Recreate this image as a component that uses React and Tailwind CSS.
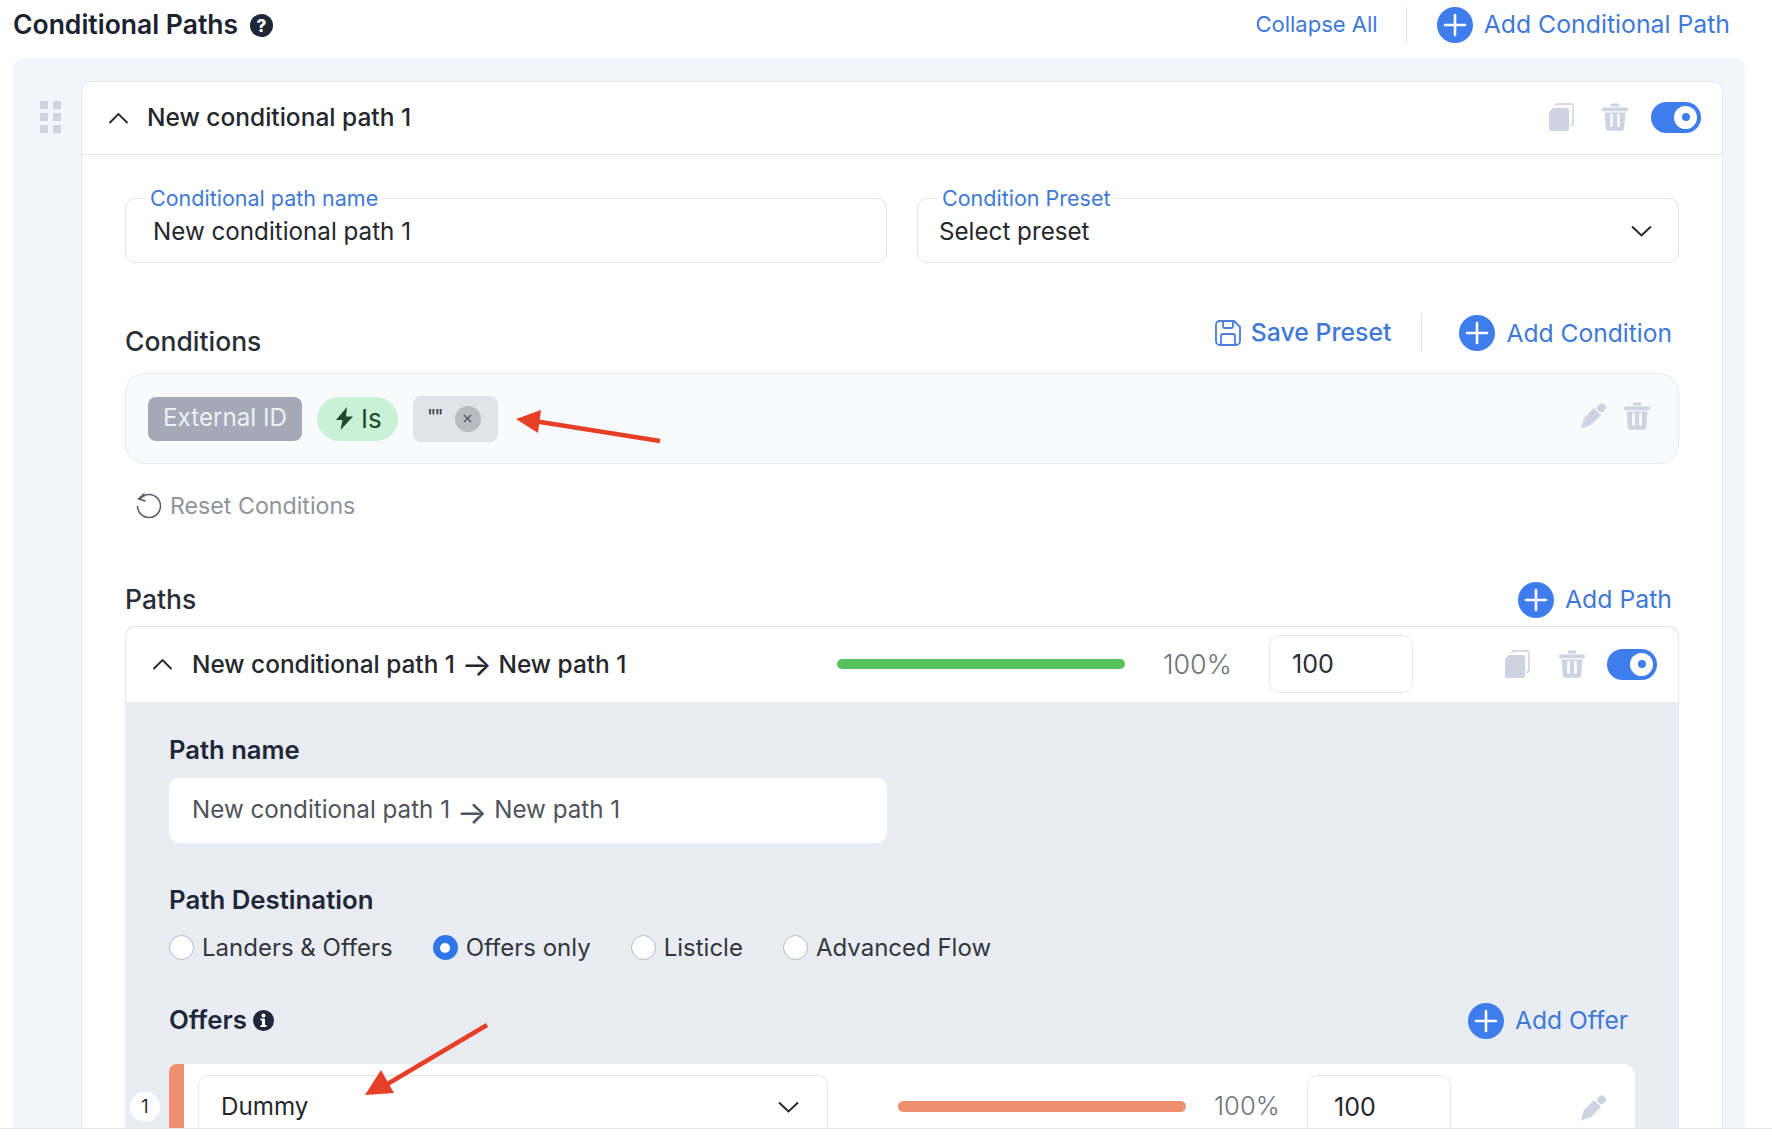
import React from "react";
import { X } from "lucide-react";

const FONT = "font-['Inter',sans-serif]";

function Chevron({ up }) {
  return (
    <svg width="21" height="12" viewBox="0 0 21 12" className="shrink-0" fill="none" stroke="#24272c" strokeWidth="1.9">
      <path d={up ? "M1.5 11L10.5 2l9 9" : "M1 1.5l9.5 9 9.5-9"} />
    </svg>
  );
}
function PlusCircle() {
  return (
    <svg width="36" height="36" viewBox="0 0 36 36" className="shrink-0">
      <circle cx="18" cy="18" r="18" fill="#3f7cec" />
      <path d="M18 8v20M8 18h20" stroke="#fff" strokeWidth="2.6" strokeLinecap="round" />
    </svg>
  );
}
function AddBtn({ label, size }) {
  return (
    <div className={"flex items-center gap-[11px] text-[#3f79d8] " + (size || "text-[24.8px]")}>
      <PlusCircle />
      <span>{label}</span>
    </div>
  );
}
function SaveIcon() {
  return (
    <svg width="26" height="26" viewBox="0 0 26 26" className="shrink-0" fill="none" stroke="#4a80d8" strokeWidth="1.8" strokeLinejoin="round">
      <path d="M4.5 1h14.5l6 6v14a4 4 0 0 1-4 4H5a4 4 0 0 1-4-4V4.5A3.5 3.5 0 0 1 4.5 1z" />
      <path d="M8 1v5.5A1.5 1.5 0 0 0 9.5 8h7A1.5 1.5 0 0 0 18 6.5V1" />
      <path d="M6 25V16a2 2 0 0 1 2-2h10a2 2 0 0 1 2 2v9" />
    </svg>
  );
}
function ResetIcon() {
  return (
    <svg width="26" height="26" viewBox="0 0 26 26" className="shrink-0 overflow-visible" fill="none" stroke="#5a5d64" strokeWidth="1.5">
      <path d="M4 6.5C6 3.5 9 1.5 13 1.5A11.5 11.5 0 1 1 1.5 13" />
      <path d="M8.5 0.5L2.5 6l7 2" />
    </svg>
  );
}
function CopyIcon() {
  return (
    <svg width="27" height="28" viewBox="0 0 27 28" className="shrink-0">
      <path d="M5 5h14a2 2 0 0 1 2 2v19a2 2 0 0 1-2 2H3a2 2 0 0 1-2-2V9z" fill="#ced3e1" />
      <path d="M8 3V2.5A1.5 1.5 0 0 1 9.5 1h14A1.5 1.5 0 0 1 25 2.5V20.5a1.5 1.5 0 0 1-1.5 1.5H22.5" fill="none" stroke="#d6dae6" strokeWidth="1.8" />
    </svg>
  );
}
function TrashIcon() {
  return (
    <svg width="28" height="28" viewBox="0 0 28 28" className="shrink-0">
      <path d="M11 2h6" stroke="#ced3e1" strokeWidth="3" strokeLinecap="round" />
      <rect x="1" y="4.5" width="26" height="3.8" rx="1.9" fill="#ced3e1" />
      <path d="M3.5 9.5h21l-1.4 16a2.5 2.5 0 0 1-2.5 2.2H7.4a2.5 2.5 0 0 1-2.5-2.2z" fill="#ced3e1" />
      <path d="M10.5 12v10.5M17.5 12v10.5" stroke="#fff" strokeWidth="2.6" strokeLinecap="round" />
    </svg>
  );
}
function PenIcon() {
  return (
    <svg width="27" height="27" viewBox="0 0 27 27" className="shrink-0">
      <path d="M1 26.5L4 16 14 6l7 7-10 10z" fill="#ced3e1" />
      <rect x="17.5" y="1.5" width="8" height="8.5" rx="3.5" transform="rotate(45 21.5 5.75)" fill="#ced3e1" />
    </svg>
  );
}
function Toggle() {
  return (
    <div className="flex h-[31px] w-[50px] shrink-0 items-center justify-end rounded-full bg-[#3f7cec] pr-[4px]">
      <div className="flex h-[23px] w-[23px] items-center justify-center rounded-full bg-white">
        <div className="h-[8px] w-[8px] rounded-full bg-[#3f7cec]" />
      </div>
    </div>
  );
}
function LongArrow() {
  return <span className="inline-block translate-y-[3px] text-[32px] font-normal leading-none">→</span>;
}
function Field({ label, value, children, className }) {
  return (
    <div className={"relative flex h-[65px] items-center justify-between rounded-[10px] border border-[#e4e6ea] bg-white pr-[26px] " + className}>
      <span className="absolute -top-[14px] left-[20px] bg-white px-[4px] text-[21.5px] leading-[26px] text-[#3f79d8]">{label}</span>
      <span className="mt-[3px] text-[24.2px] text-[#24272c]">{value}</span>
      {children}
    </div>
  );
}
function Radio({ label, checked, className }) {
  return (
    <div className={"flex items-center gap-[8px] text-[24px] text-[#33363c] " + (className || "")}>
      {checked ? (
        <div className="flex h-[25px] w-[25px] items-center justify-center rounded-full bg-[#2f77e8]">
          <div className="h-[10px] w-[10px] rounded-full bg-white" />
        </div>
      ) : (
        <div className="h-[25px] w-[25px] rounded-full border border-[#b6bac2] bg-white" />
      )}
      <span>{label}</span>
    </div>
  );
}

export default function App() {
  return (
    <div className={"flex h-[1144px] w-[1772px] flex-col overflow-hidden bg-white " + FONT}>
      <div className="h-[1128px] overflow-hidden">
        {/* Top bar */}
        <div className="flex h-[58px] items-center justify-between pb-[8px] pl-[13px] pr-[42px]">
          <div className="flex items-center gap-[12px]">
            <span className="text-[26.5px] font-semibold text-[#1c2230]">Conditional Paths</span>
            <svg width="23" height="23" viewBox="0 0 23 23" className="shrink-0">
              <circle cx="11.5" cy="11.5" r="11.5" fill="#1f2738" />
              <text x="11.5" y="17.5" textAnchor="middle" fontSize="17" fontWeight="800" fill="#fff" fontFamily="Inter">?</text>
            </svg>
          </div>
          <div className="flex items-center">
            <span className="-mt-[1px] text-[22px] text-[#3f79d8]">Collapse All</span>
            <div className="ml-[28px] mr-[30px] h-[36px] w-px bg-[#dfe2e7]" />
            <AddBtn label="Add Conditional Path" />
          </div>
        </div>

        {/* Panel */}
        <div className="ml-[13px] mr-[27px] flex rounded-t-[12px] bg-[#f2f5fb] pl-[27px] pr-[22px] pt-[23px]">
          <div className="grid h-[32px] w-[41px] shrink-0 translate-y-[20px] grid-cols-2 gap-x-[5px] gap-y-[4px] pr-[20px]">
            {[0, 1, 2, 3, 4, 5].map((i) => (
              <div key={i} className="h-[8px] w-[8px] bg-[#ced3e1]" />
            ))}
          </div>
          <div className="min-w-0 flex-1 rounded-t-[10px] border border-b-0 border-[#e6e8ee] bg-white">
            {/* Card header */}
            <div className="flex h-[73px] items-center justify-between border-b border-[#e3e5ea] pl-[26px] pr-[21px]">
              <div className="flex items-center gap-[18px]">
                <Chevron up />
                <span className="-mt-[1px] text-[24.5px] font-medium text-[#24272c]">New conditional path 1</span>
              </div>
              <div className="-mt-[2px] flex items-center gap-[26px]">
                <CopyIcon />
                <div className="flex items-center gap-[22px]">
                  <TrashIcon />
                  <Toggle />
                </div>
              </div>
            </div>

            {/* Body */}
            <div className="px-[43px] pt-[43px]">
              <div className="flex gap-[30px]">
                <Field label="Conditional path name" value="New conditional path 1" className="w-[762px] shrink-0 pl-[27px]" />
                <Field label="Condition Preset" value="Select preset" className="min-w-0 flex-1 pl-[21px]">
                  <Chevron />
                </Field>
              </div>

              <div className="mt-[50px] flex h-[40px] items-center justify-between">
                <span className="mt-[18px] text-[26.5px] font-medium text-[#2a2e36]">Conditions</span>
                <div className="flex items-center pr-[7px]">
                  <div className="flex items-center gap-[10px] text-[24.8px] font-medium text-[#3f79d8]">
                    <SaveIcon />
                    <span>Save Preset</span>
                  </div>
                  <div className="ml-[30px] mr-[37px] h-[38px] w-px bg-[#dfe2e7]" />
                  <AddBtn label="Add Condition" size="text-[24.6px]" />
                </div>
              </div>

              {/* Conditions box */}
              <div className="mt-[20px] flex h-[91px] items-center justify-between rounded-[20px] border border-[#e8eaee] bg-[#f9fafc] pl-[22px] pr-[27px]">
                <div className="flex items-center gap-[15px]">
                  <div className="flex h-[44px] items-center rounded-[8px] bg-[#a3a9b6] px-[15px] text-[24.2px] text-[#eef0f3]">External ID</div>
                  <div className="flex h-[44px] w-[81px] items-center justify-center gap-[8px] rounded-full bg-[#c9f1d6] pl-[3px] text-[26px] text-[#1d4a2f]">
                    <svg width="17" height="23" viewBox="0 0 17 23" className="shrink-0">
                      <path d="M11 0L0 13h6.5L4.5 23 17 9.5h-7z" fill="#1d4a2f" />
                    </svg>
                    <span>Is</span>
                  </div>
                  <div className="relative flex h-[46px] w-[85px] items-center justify-end rounded-[8px] bg-[#e1e3e8] pr-[17px] text-[#3a3d44]">
                    <span className="absolute left-[14px] top-[9px] text-[20px] leading-[24px] tracking-[-2px]">""</span>
                    <div className="flex h-[26px] w-[26px] items-center justify-center rounded-full bg-[#b8bbc2]">
                      <X size={13} strokeWidth={2} className="text-[#4a4d55]" />
                    </div>
                  </div>
                  <svg width="146" height="38" viewBox="0 0 146 38" className="ml-[3px] translate-y-[6px] overflow-visible">
                    <line x1="18" y1="15" x2="144" y2="35" stroke="#e63f25" strokeWidth="4.5" />
                    <polygon points="0,13 25,4 22,27" fill="#e63f25" />
                  </svg>
                </div>
                <div className="flex -translate-y-[3px] items-center gap-[16px]">
                  <PenIcon />
                  <TrashIcon />
                </div>
              </div>

              {/* Reset */}
              <div className="mt-[25px] flex items-center gap-[8px] pl-[11px] text-[23.2px] text-[#8f939b]">
                <ResetIcon />
                <span>Reset Conditions</span>
              </div>

              {/* Paths */}
              <div className="mt-[53px] flex h-[46px] items-center justify-between pr-[7px]">
                <span className="text-[26.5px] font-medium text-[#2a2e36]">Paths</span>
                <AddBtn label="Add Path" />
              </div>

              {/* Path card */}
              <div className="mt-[3px] rounded-t-[10px] border border-b-0 border-[#e6e8ee] bg-[#e9edf3]">
                <div className="flex h-[75px] items-center rounded-t-[10px] bg-white pl-[26px] pr-[21px]">
                  <Chevron up />
                  <span className="ml-[19px] w-[645px] whitespace-pre text-[24.4px] font-medium text-[#24272c]">New conditional path 1 <LongArrow /> New path 1</span>
                  <div className="h-[10px] w-[288px] shrink-0 rounded-full bg-[#56c25d]" />
                  <span className="ml-[38px] w-[106px] text-[26.8px] font-light text-[#6f7279]">100%</span>
                  <div className="flex h-[58px] w-[144px] shrink-0 items-center rounded-[10px] border border-[#e6e8ee] pl-[22px] text-[25px] text-[#2a2d33]">100</div>
                  <div className="ml-auto flex items-center gap-[27px]">
                    <CopyIcon />
                    <div className="flex items-center gap-[21px]">
                      <TrashIcon />
                      <Toggle />
                    </div>
                  </div>
                </div>

                <div className="px-[43px] pt-[31px]">
                  <div className="text-[25.6px] font-semibold leading-[34px] text-[#1f2738]">Path name</div>
                  <div className="mt-[11px] flex h-[65px] w-[718px] items-center whitespace-pre rounded-[10px] bg-white pl-[23px] text-[24.2px] text-[#50545c]">New conditional path 1 <LongArrow /> New path 1</div>
                  <div className="mt-[40px] text-[25.8px] font-semibold leading-[34px] text-[#1f2738]">Path Destination</div>
                  <div className="mt-[13px] flex items-center">
                    <Radio label="Landers & Offers" />
                    <Radio label="Offers only" checked className="ml-[40px]" />
                    <Radio label="Listicle" className="ml-[40px]" />
                    <Radio label="Advanced Flow" className="ml-[40px]" />
                  </div>
                  <div className="mt-[36px] flex h-[38px] items-center justify-between pr-[7px]">
                    <div className="flex items-center gap-[6px] text-[25.8px] font-semibold text-[#1f2738]">
                      <span>Offers</span>
                      <svg width="21" height="21" viewBox="0 0 21 21" className="shrink-0">
                        <circle cx="10.5" cy="10.5" r="10.5" fill="#1f2738" />
                        <rect x="9" y="9" width="3" height="7.5" fill="#fff" />
                        <rect x="7.5" y="15" width="6" height="2" fill="#fff" />
                        <rect x="7.5" y="8.5" width="4" height="2" fill="#fff" />
                        <circle cx="10.5" cy="5.5" r="2" fill="#fff" />
                      </svg>
                    </div>
                    <AddBtn label="Add Offer" size="text-[24.6px]" />
                  </div>

                  {/* Offer row */}
                  <div className="relative mt-[24px] flex h-[120px] rounded-l-[12px] rounded-tr-[12px] bg-white">
                    <div className="absolute -left-[39px] top-[28px] flex h-[30px] w-[30px] items-center justify-center rounded-full bg-white text-[18px] text-[#24272c]">1</div>
                    <div className="w-[15px] shrink-0 rounded-l-[8px] bg-[#ee8f6e]" />
                    <div className="ml-[14px] mt-[11px] flex h-[100px] w-[630px] shrink-0 items-start justify-between rounded-[10px] border border-[#e6e8ee] bg-white pl-[22px] pr-[28px] pt-[13px]">
                      <span className="text-[24.2px] text-[#24272c]">Dummy</span>
                      <div className="mt-[12px]"><Chevron /></div>
                    </div>
                    <svg width="124" height="74" viewBox="0 0 124 74" className="absolute left-[196px] -top-[41px]">
                      <line x1="122" y1="2" x2="14" y2="66" stroke="#e63f25" strokeWidth="4.5" />
                      <polygon points="0,72 29,70 16,47" fill="#e63f25" />
                    </svg>
                    <div className="ml-[70px] mt-[37px] h-[11px] w-[288px] shrink-0 rounded-full bg-[#ee8f6e]" />
                    <span className="ml-[28px] mt-[23px] w-[93px] text-[25.6px] font-light text-[#6f7279]">100%</span>
                    <div className="mt-[11px] h-[100px] w-[144px] shrink-0 rounded-[10px] border border-[#e6e8ee] pl-[26px] pt-[13px] text-[25px] text-[#24272c]">100</div>
                    <div className="ml-[129px] mt-[30px]"><PenIcon /></div>
                  </div>
                </div>
              </div>
            </div>
          </div>
        </div>
      </div>
      <div className="h-[16px] shrink-0 border-t border-[#dfe2e7] bg-white" />
    </div>
  );
}
